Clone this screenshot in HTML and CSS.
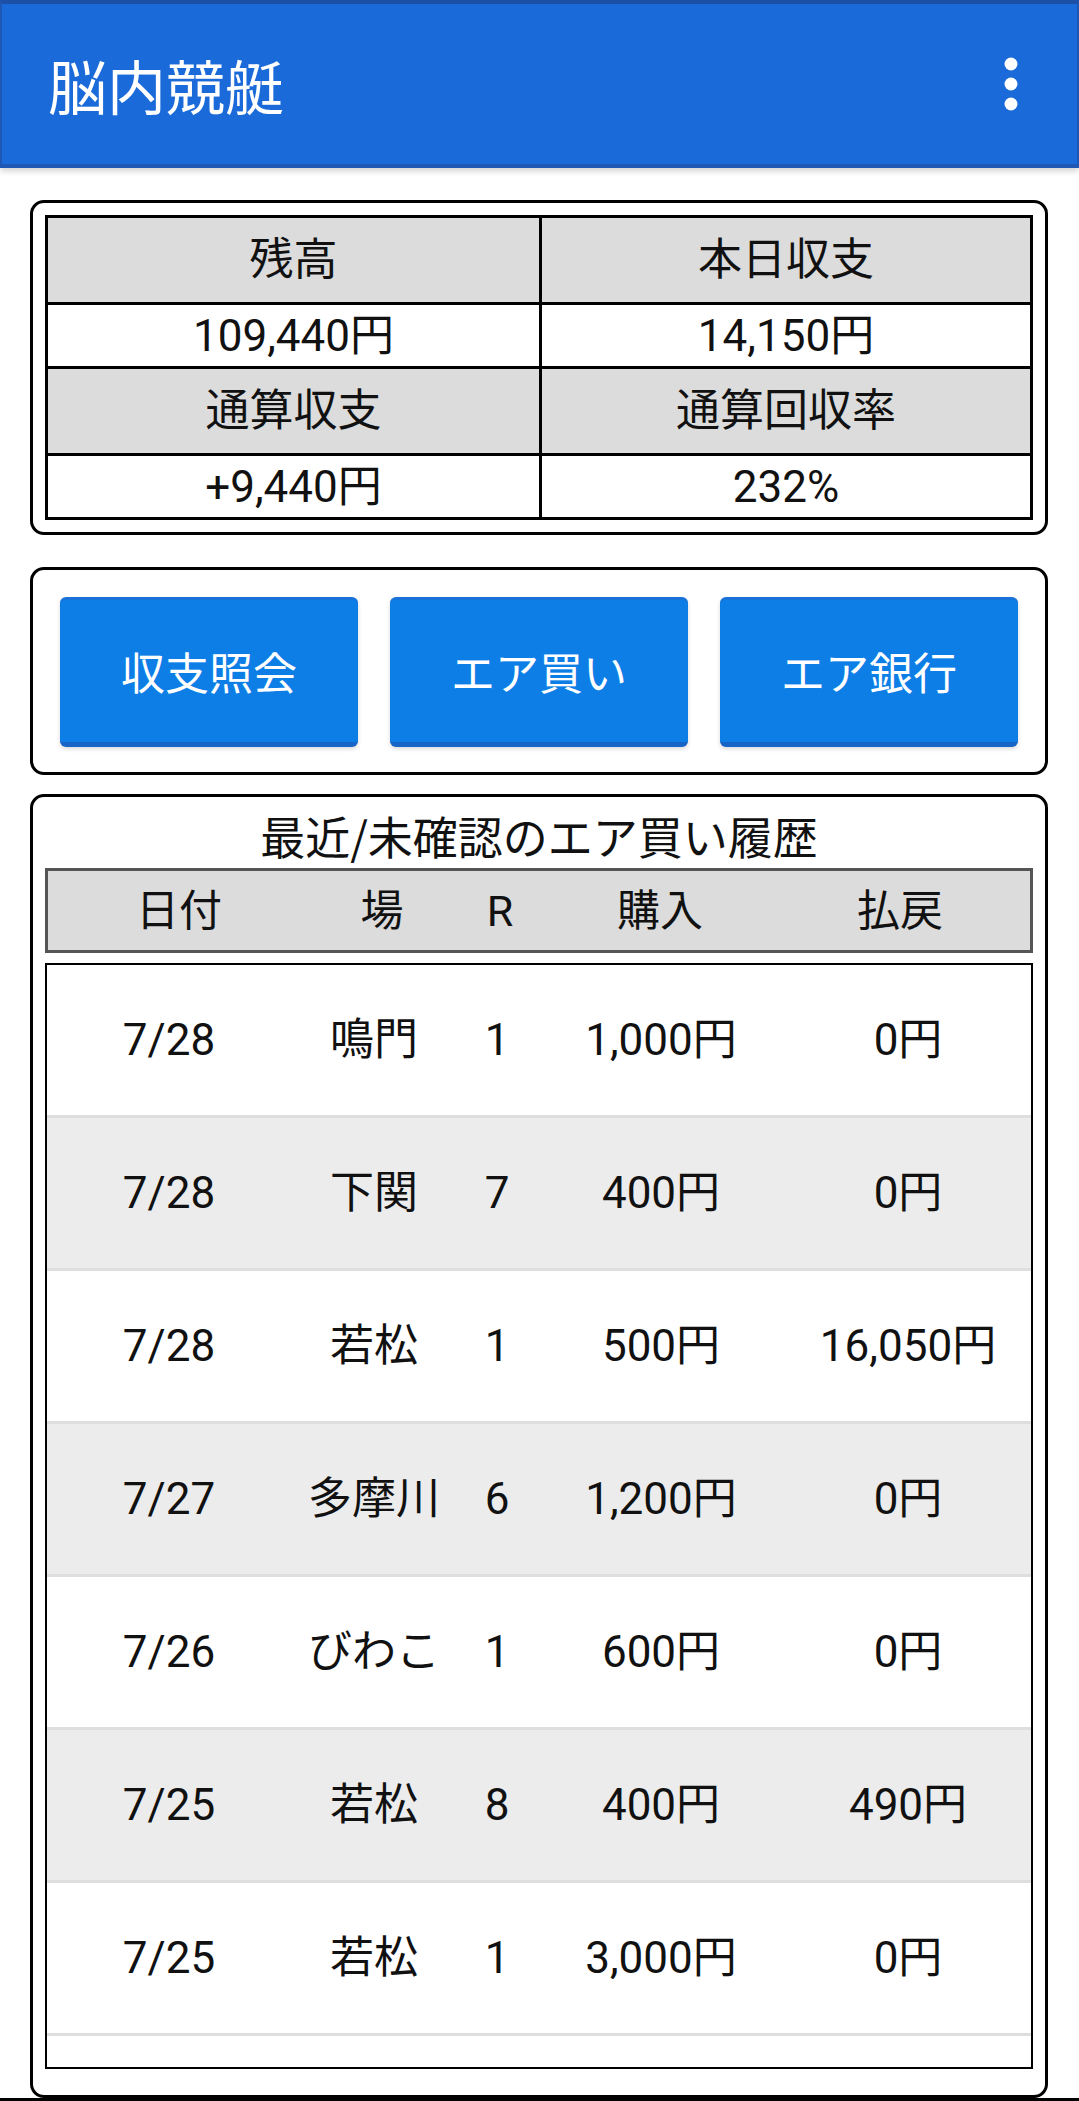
FILE: index.html
```html
<!DOCTYPE html>
<html lang="ja">
<head>
<meta charset="utf-8">
<title>脳内競艇</title>
<link rel="stylesheet" href="styles.css">
</head>
<body>
<header class="appbar">
  <h1 class="appbar-title">脳内競艇</h1>
  <svg class="appbar-menu" width="16" height="56" viewBox="0 0 16 56" aria-hidden="true">
    <circle cx="8" cy="8" r="6.5" fill="#fff"/>
    <circle cx="8" cy="28" r="6.5" fill="#fff"/>
    <circle cx="8" cy="48" r="6.5" fill="#fff"/>
  </svg>
</header>

<main class="content">
  <section class="card card-summary">
    <div class="summary">
      <div class="sum-row sum-head">
        <div class="sum-cell">残高</div>
        <div class="sum-cell">本日収支</div>
      </div>
      <div class="sum-row sum-val">
        <div class="sum-cell">109,440円</div>
        <div class="sum-cell">14,150円</div>
      </div>
      <div class="sum-row sum-head">
        <div class="sum-cell">通算収支</div>
        <div class="sum-cell">通算回収率</div>
      </div>
      <div class="sum-row sum-val last">
        <div class="sum-cell">+9,440円</div>
        <div class="sum-cell">232%</div>
      </div>
    </div>
  </section>

  <section class="card card-actions">
    <button class="action">収支照会</button>
    <button class="action">エア買い</button>
    <button class="action">エア銀行</button>
  </section>

  <section class="card card-history">
    <h2 class="history-title">最近/未確認のエア買い履歴</h2>
    <div class="history-head">
      <span>日付</span><span>場</span><span>R</span><span>購入</span><span>払戻</span>
    </div>
    <div class="history-list">
      <div class="hrow"><span>7/28</span><span>鳴門</span><span>1</span><span>1,000円</span><span>0円</span></div>
      <div class="hrow alt"><span>7/28</span><span>下関</span><span>7</span><span>400円</span><span>0円</span></div>
      <div class="hrow"><span>7/28</span><span>若松</span><span>1</span><span>500円</span><span>16,050円</span></div>
      <div class="hrow alt"><span>7/27</span><span>多摩川</span><span>6</span><span>1,200円</span><span>0円</span></div>
      <div class="hrow"><span>7/26</span><span>びわこ</span><span>1</span><span>600円</span><span>0円</span></div>
      <div class="hrow alt"><span>7/25</span><span>若松</span><span>8</span><span>400円</span><span>490円</span></div>
      <div class="hrow"><span>7/25</span><span>若松</span><span>1</span><span>3,000円</span><span>0円</span></div>
    </div>
  </section>
</main>
<div class="navstrip"></div>
</body>
</html>
```

FILE: styles.css
```css
* { box-sizing: border-box; }

html, body {
  margin: 0;
  padding: 0;
  background: #ffffff;
}

body {
  width: 1079px;
  height: 2101px;
  overflow: hidden;
  font-family: Roboto, "Noto Sans CJK JP", "Noto Sans", sans-serif;
  color: #111;
  display: flex;
  flex-direction: column;
}

.appbar {
  height: 168px;
  flex: 0 0 168px;
  background: #1a6ad9;
  border-top: 4px solid #1c4fa6;
  border-bottom: 4px solid #1f57b4;
  border-left: 2px solid #1f57b4;
  border-right: 2px solid #1f57b4;
  display: flex;
  align-items: center;
  justify-content: space-between;
  padding: 0 58px 0 46px;
  box-shadow: 0 3px 6px rgba(0, 0, 0, 0.18);
  position: relative;
  z-index: 1;
}

.appbar-title {
  margin: 0;
  font-family: "Noto Sans CJK JP", sans-serif;
  font-weight: 400;
  font-size: 59px;
  color: #ffffff;
  line-height: 1;
}

.appbar-menu { display: block; }

.content {
  flex: 1;
  display: flex;
  flex-direction: column;
  padding: 32px 31px 0 30px;
}

.card {
  border: 3px solid #000;
  border-radius: 14px;
  background: #fff;
}

/* Summary */
.card-summary {
  padding: 12px;
}

.summary {
  border: 3px solid #000;
  display: flex;
  flex-direction: column;
}

.sum-row {
  display: grid;
  grid-template-columns: 1fr 1fr;
  border-bottom: 3px solid #000;
}
.sum-row.last { border-bottom: none; }

.sum-head { background: #dcdcdc; height: 87px; }
.sum-val { background: #fff; height: 64px; }
.sum-val.last { height: 61px; }

.sum-cell {
  display: flex;
  align-items: center;
  justify-content: center;
  font-size: 44px;
  line-height: 52px;
  color: #111;
}
.sum-cell + .sum-cell { border-left: 3px solid #000; }

/* Actions */
.card-actions {
  margin-top: 32px;
  padding: 27px 27px 25px 27px;
  display: flex;
  gap: 32px;
}

.action {
  flex: 1;
  height: 150px;
  border: none;
  border-top: 3px solid #1872d8;
  border-bottom: 5px solid #1865c8;
  border-radius: 6px;
  background: #0d7ee6;
  color: #ffffff;
  font-family: "Noto Sans CJK JP", sans-serif;
  font-size: 44px;
  box-shadow: 0 2px 4px rgba(0, 0, 0, 0.15);
  padding: 0;
}

/* History */
.card-history {
  margin-top: 19px;
  padding: 0 12px 26px 12px;
  flex: 0 0 1304px;
  display: flex;
  flex-direction: column;
}

.history-title {
  margin: 0;
  height: 71px;
  display: flex;
  align-items: center;
  justify-content: center;
  padding-top: 6px;
  font-family: "Noto Sans CJK JP", sans-serif;
  font-weight: 400;
  font-size: 45px;
  color: #111;
}

.history-head {
  height: 85px;
  border: 3px solid #555;
  background: #dcdcdc;
  display: grid;
  grid-template-columns: 262px 144px 92px 228px 1fr;
  align-items: center;
  justify-items: center;
  font-size: 43px;
  line-height: 52px;
  color: #111;
  padding-right: 4px;
}

.history-list {
  margin-top: 10px;
  height: 1106px;
  border: 2px solid #000;
  overflow: hidden;
}

.hrow {
  height: 153px;
  border-bottom: 3px solid #dedede;
  background: #fff;
  display: grid;
  grid-template-columns: 244px 166px 80px 248px 1fr;
  align-items: center;
  justify-items: center;
  font-size: 44px;
  line-height: 52px;
  color: #111;
}
.hrow span { display: block; height: 52px; }
.hrow.alt { background: #ececec; }

.navstrip {
  height: 4px;
  flex: 0 0 4px;
  background: #000;
  margin-top: auto;
}
```
